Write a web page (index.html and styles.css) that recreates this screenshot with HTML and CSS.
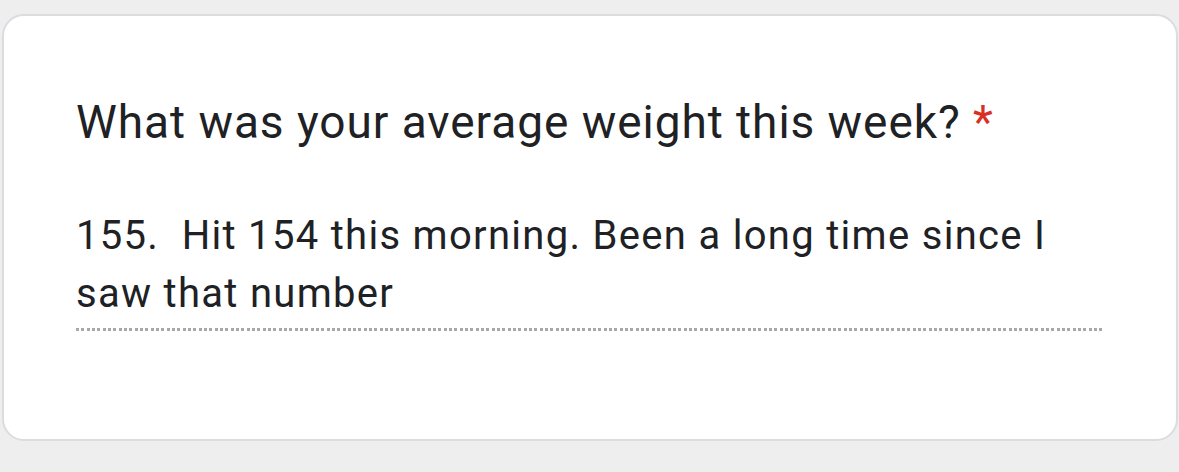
FILE: index.html
```html
<!DOCTYPE html>
<html>
<head>
<meta charset="utf-8">
<link rel="stylesheet" href="styles.css">
</head>
<body>
<div class="card">
  <div class="title">What was your average weight this week? <span class="req">*</span></div>
  <div class="answer">155.&nbsp; Hit 154 this morning. Been a long time since I saw that number</div>
  <div class="dots"></div>
</div>
</body>
</html>
```
FILE: styles.css
```css
html, body { margin: 0; padding: 0; }
body {
  background: #eeeeee;
  width: 1179px;
  height: 472px;
  font-family: Roboto, "Liberation Sans", sans-serif;
  color: #202124;
  padding-top: 14px;
  padding-left: 2px;
  box-sizing: border-box;
}
.card {
  box-sizing: border-box;
  width: 1176px;
  height: 427px;
  background: #fff;
  border: 2px solid #dadce0;
  border-radius: 22px;
  padding: 78px 72px 0 72px;
}
.title {
  font-size: 46px;
  line-height: 56px;
  letter-spacing: 0.95px;
}
.req { color: #d93025; }
.answer {
  margin-top: 57px;
  font-size: 40px;
  line-height: 58px;
  letter-spacing: 1.3px;
  width: 1000px;
}
.dots {
  margin-top: 5px;
  width: 1028px;
  height: 3px;
  background: repeating-linear-gradient(to right, #a8a8a8 0 3px, transparent 3px 5.33px);
}
```
